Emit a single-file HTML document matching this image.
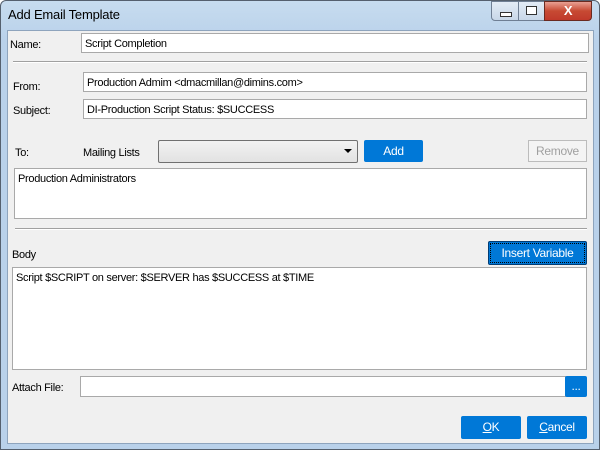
<!DOCTYPE html><html><head><style>
body{margin:0;width:600px;height:450px;overflow:hidden;font-family:"Liberation Sans",sans-serif;font-size:11px;letter-spacing:-0.3px;color:#000}
.win{position:absolute;left:0;top:0;width:598px;height:448px;border:1px solid #55606e;border-radius:6px 6px 0 0;background:linear-gradient(#c7dcef,#b9d1ea 40px,#b9d1ea)}
.client{position:absolute;left:7px;top:30px;width:585px;height:412px;background:#f0f0f0;border:1px solid #8ea4bd}
.a{position:absolute}
.l{position:absolute;margin-top:2px}
.in{position:absolute;background:#fff;border:1px solid #a9a9a9;box-sizing:border-box;padding:4px 3px 2px;white-space:nowrap}
.hr{position:absolute;height:0;border-top:1px solid #a0a0a0;border-bottom:1px solid #fff}
.btn{position:absolute;background:#0078d7;color:#fff;text-align:center;box-sizing:border-box;border-radius:2px;line-height:22px;font-size:12px}
</style></head><body>
<div class="win"></div>
<div class="a" style="left:8px;top:7px;font-size:13px;letter-spacing:-0.2px">Add Email Template</div>
<div class="a" style="left:491px;top:1px;width:26px;height:18px;border:1px solid #6f7f94;border-radius:0 0 0 4px;background:linear-gradient(#e3ecf6,#c8d7e8)"><div class="a" style="left:8px;top:10px;width:10px;height:3px;border:1px solid #333;background:#fff"></div></div>
<div class="a" style="left:518px;top:1px;width:25px;height:18px;border:1px solid #6f7f94;background:linear-gradient(#e3ecf6,#c8d7e8)"><div class="a" style="left:7px;top:4px;width:9px;height:7px;border:1px solid #333;background:#fff"></div></div>
<div class="a" style="left:544px;top:1px;width:46px;height:18px;border:1px solid #6a2a20;border-radius:0 0 4px 0;background:linear-gradient(#e8a093,#c74a33 50%,#c0392b);color:#fff;text-align:center;font-weight:bold;font-size:13px;line-height:18px">X</div>
<div class="client"></div>
<div class="l" style="left:10px;top:37px">Name:</div>
<div class="in" style="left:81px;top:33px;width:508px;height:20px">Script Completion</div>
<div class="hr" style="left:13px;top:61px;width:574px"></div>
<div class="l" style="left:13px;top:79px">From:</div>
<div class="in" style="left:83px;top:72px;width:504px;height:20px">Production Admim &lt;dmacmillan@dimins.com&gt;</div>
<div class="l" style="left:13px;top:103px">Subject:</div>
<div class="in" style="left:83px;top:99px;width:504px;height:20px">DI-Production Script Status: $SUCCESS</div>
<div class="l" style="left:15px;top:145px">To:</div>
<div class="l" style="left:83px;top:145px">Mailing Lists</div>
<div class="a" style="left:158px;top:140px;width:198px;height:21px;border:1px solid #707070;border-radius:2px;background:linear-gradient(#f2f2f2,#e2e2e2)"><div class="a" style="right:5px;top:8px;border-left:4px solid transparent;border-right:4px solid transparent;border-top:4px solid #000"></div></div>
<div class="btn" style="left:364px;top:140px;width:59px;height:22px">Add</div>
<div class="a" style="left:528px;top:140px;width:59px;height:22px;border:1px solid #bcbcbc;box-sizing:border-box;color:#a0a0a0;text-align:center;line-height:20px;background:#f4f4f4;font-size:12px">Remove</div>
<div class="in" style="left:14px;top:168px;width:573px;height:51px">Production Administrators</div>
<div class="hr" style="left:15px;top:228px;width:572px"></div>
<div class="l" style="left:12px;top:247px">Body</div>
<div class="btn" style="left:488px;top:241px;width:99px;height:24px;border:1px solid #003c74;outline:1px dotted #000;outline-offset:-3px;line-height:22px">Insert Variable</div>
<div class="in" style="left:12px;top:267px;width:575px;height:103px">Script $SCRIPT on server: $SERVER has $SUCCESS at $TIME</div>
<div class="l" style="left:12px;top:380px">Attach File:</div>
<div class="in" style="left:80px;top:376px;width:486px;height:21px"></div>
<div class="btn" style="left:565px;top:376px;width:22px;height:21px;line-height:21px">...</div>
<div class="btn" style="left:461px;top:416px;width:60px;height:23px;line-height:23px"><u>O</u>K</div>
<div class="btn" style="left:527px;top:416px;width:60px;height:23px;line-height:23px"><u>C</u>ancel</div>
</body></html>
